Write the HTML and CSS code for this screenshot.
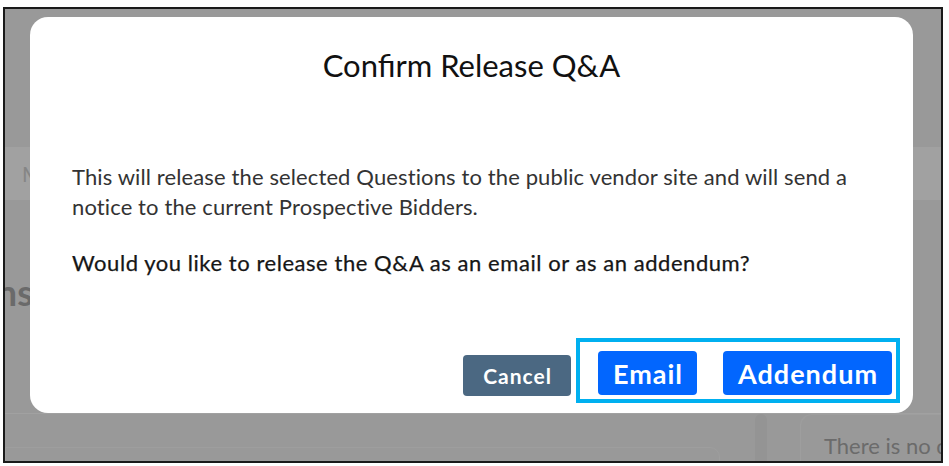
FILE: index.html
```html
<!DOCTYPE html>
<html lang="en">
<head>
<meta charset="utf-8">
<title>Confirm Release Q&amp;A</title>
<link rel="stylesheet" href="styles.css">
</head>
<body>
<div class="frame">
  <div class="page">
    <div class="page-top"></div>
    <div class="page-tabs"><span class="tab">Main</span></div>
    <div class="page-main">
      <div class="heading-clip"><h2 class="page-heading">Questions</h2></div>
    </div>
    <div class="page-bottom">
      <div class="panel-left"><div class="panel-box"></div></div>
      <div class="scroll-strip"></div>
      <div class="empty-card">There is no data</div>
    </div>
  </div>
  <div class="backdrop">
    <div class="modal">
      <h1 class="modal-title">Confirm Release Q&amp;A</h1>
      <p class="modal-text">This will release the selected Questions to the public vendor site and will send a notice to the current Prospective Bidders.</p>
      <p class="modal-question">Would you like to release the Q&amp;A as an email or as an addendum?</p>
      <div class="modal-footer">
        <button class="btn btn-cancel">Cancel</button>
        <div class="highlight">
          <button class="btn btn-primary btn-email">Email</button>
          <button class="btn btn-primary btn-addendum">Addendum</button>
        </div>
      </div>
    </div>
  </div>
</div>
</body>
</html>
```
FILE: styles.css
```css
* { box-sizing: border-box; }
body {
  margin: 0;
  background: #ffffff;
  font-family: Lato, "Open Sans", sans-serif;
}
.frame {
  position: relative;
  margin: 7px 0 0 3px;
  width: 940px;
  height: 456px;
  border: 2px solid #1a1a1a;
  overflow: hidden;
  background: #f3f3f3;
}
.page {
  display: flex;
  flex-direction: column;
  height: 100%;
}
.page-top { height: 138px; }
.page-tabs {
  height: 53px;
  background: #ffffff;
  display: flex;
  align-items: center;
  padding-left: 17px;
  font-size: 21px;
  color: #d3d3d3;
}
.page-main { flex: 1; }
.heading-clip {
  width: 28px;
  margin-top: 74px;
  display: flex;
  justify-content: flex-end;
  overflow: hidden;
}
.page-heading {
  margin: 0;
  font-size: 36px;
  line-height: 1;
  font-weight: 700;
  color: #a8a8a8;
  white-space: nowrap;
}
.page-bottom {
  height: 48px;
  display: flex;
  border-top: 1px solid #ffffff;
}
.panel-left {
  width: 750px;
  padding-top: 33px;
}
.panel-box {
  width: 715px;
  height: 30px;
  border: 1px solid #fafafa;
  border-radius: 0 10px 0 0;
}
.scroll-strip {
  width: 12px;
  background: #ebebeb;
  border-radius: 6px 6px 0 0;
}
.empty-card {
  margin-left: 33px;
  flex: 1;
  border: 1px solid #fafafa;
  border-right: 0;
  border-bottom: 0;
  border-radius: 12px 0 0 0;
  padding: 17px 0 0 23px;
  font-size: 22px;
  color: #aaaaaa;
  white-space: nowrap;
  overflow: hidden;
}
.backdrop {
  position: absolute;
  inset: 0;
  background: rgba(0, 0, 0, 0.37);
  padding: 8px 28px 48px 25px;
  display: flex;
}
.modal {
  flex: 1;
  background: #ffffff;
  border-radius: 18px;
  display: flex;
  flex-direction: column;
}
.modal-title {
  margin: 0;
  padding-top: 28px;
  font-size: 31px;
  line-height: 40px;
  font-weight: 400;
  color: #111111;
  text-align: center;
}
.modal-text {
  margin: 77px 0 0;
  padding: 0 42px;
  font-size: 22px;
  letter-spacing: 0.12px;
  line-height: 30px;
  color: #333333;
}
.modal-question {
  margin: 26px 0 0;
  padding: 0 42px;
  font-size: 22px;
  letter-spacing: 0.55px;
  line-height: 30px;
  color: #161616;
  -webkit-text-stroke: 0.25px #161616;
}
.modal-footer {
  margin-top: auto;
  padding: 0 13px 10px 0;
  display: flex;
  justify-content: flex-end;
  align-items: flex-end;
}
.btn {
  border: 0;
  border-radius: 4px;
  color: #ffffff;
  font-family: Lato, "Open Sans", sans-serif;
  font-weight: 700;
  cursor: pointer;
}
.btn-cancel {
  height: 41px;
  padding: 0 19px 0 20px;
  margin: 0 5px 7px 0;
  background: #4b6882;
  font-size: 21px;
  letter-spacing: 1px;
}
.highlight {
  display: flex;
  gap: 26px;
  border: 4px solid #00b0f0;
  padding: 9px 4px 4px 18px;
}
.btn-primary {
  height: 44px;
  padding: 0 14px 0 15px;
  background: #0266fe;
  font-size: 27px;
  letter-spacing: 1px;
}
```
